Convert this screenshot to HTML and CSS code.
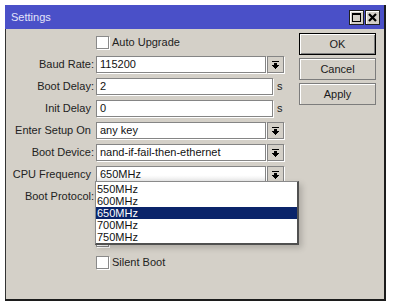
FILE: index.html
```html
<!DOCTYPE html>
<html>
<head>
<meta charset="utf-8">
<link rel="stylesheet" href="styles.css">
</head>
<body>
<div class="window">
  <div class="titlebar">
    <span class="title">Settings</span>
    <div class="tb-buttons">
      <span class="tb-btn"><svg width="13" height="13" viewBox="0 0 13 13" shape-rendering="crispEdges"><rect x="2.5" y="2.5" width="8" height="8" fill="none" stroke="#000"/><rect x="2" y="2" width="9" height="2" fill="#000"/></svg></span>
      <span class="tb-btn"><svg width="13" height="13" viewBox="0 0 13 13"><path d="M3 3L10 10M10 3L3 10" stroke="#000" stroke-width="2.2"/></svg></span>
    </div>
  </div>
  <div class="body">
    <div class="form">
      <div class="row check-row"><span class="label"></span><span class="checkbox"></span><span class="check-label">Auto Upgrade</span></div>
      <div class="row"><span class="label">Baud Rate:</span><span class="field sel">115200</span><span class="drop-btn"><svg width="7" height="8" viewBox="0 0 7 8" shape-rendering="crispEdges"><path d="M0 0h7v1H0z M2 2h3v2h2v1h-1v1h-1v1h-1v1h-1v-1h-1v-1h-1v-1H0v-1h2z" fill="#000"/></svg></span></div>
      <div class="row"><span class="label">Boot Delay:</span><span class="field num">2</span><span class="unit">s</span></div>
      <div class="row"><span class="label">Init Delay&nbsp;</span><span class="field num">0</span><span class="unit">s</span></div>
      <div class="row"><span class="label">Enter Setup On&nbsp;</span><span class="field sel">any key</span><span class="drop-btn"><svg width="7" height="8" viewBox="0 0 7 8" shape-rendering="crispEdges"><path d="M0 0h7v1H0z M2 2h3v2h2v1h-1v1h-1v1h-1v1h-1v-1h-1v-1h-1v-1H0v-1h2z" fill="#000"/></svg></span></div>
      <div class="row"><span class="label">Boot Device:</span><span class="field sel">nand-if-fail-then-ethernet</span><span class="drop-btn"><svg width="7" height="8" viewBox="0 0 7 8" shape-rendering="crispEdges"><path d="M0 0h7v1H0z M2 2h3v2h2v1h-1v1h-1v1h-1v1h-1v-1h-1v-1h-1v-1H0v-1h2z" fill="#000"/></svg></span></div>
      <div class="row"><span class="label">CPU Frequency&nbsp;</span><span class="field sel active">650MHz</span><span class="drop-btn"><svg width="7" height="8" viewBox="0 0 7 8" shape-rendering="crispEdges"><path d="M0 0h7v1H0z M2 2h3v2h2v1h-1v1h-1v1h-1v1h-1v-1h-1v-1h-1v-1H0v-1h2z" fill="#000"/></svg></span>
        <div class="listbox">
          <div class="item">550MHz</div>
          <div class="item">600MHz</div>
          <div class="item selected">650MHz</div>
          <div class="item">700MHz</div>
          <div class="item">750MHz</div>
        </div>
      </div>
      <div class="row"><span class="label">Boot Protocol:</span><span class="field sel"></span><span class="drop-btn"></span></div>
      <div class="row check-row"><span class="label"></span><span class="checkbox"></span></div>
      <div class="row check-row"><span class="label"></span><span class="checkbox"></span></div>
      <div class="row check-row"><span class="label"></span><span class="checkbox"></span><span class="check-label">Silent Boot</span></div>
    </div>
    <div class="actions">
      <button class="btn btn-default">OK</button>
      <button class="btn">Cancel</button>
      <button class="btn">Apply</button>
    </div>
  </div>
</div>
</body>
</html>
```
FILE: styles.css
```css
body {
  margin: 0;
  background: #fff;
  font: 11px "Liberation Sans", Arial, sans-serif;
  color: #1a1a1a;
}

.window {
  margin: 5px 0 0 5px;
  width: 381px;
  height: 296px;
  box-sizing: border-box;
  border-right: 2px solid #1c1c1c;
  border-bottom: 2px solid #1c1c1c;
  background: #d4d0c8;
  display: flex;
  flex-direction: column;
}

.titlebar {
  height: 24px;
  flex: none;
  background: #4a50c8;
  display: flex;
  align-items: center;
  justify-content: space-between;
  padding: 0 4px 0 6px;
}

.title {
  color: #e4e4fa;
  font-size: 11px;
}

.tb-buttons {
  display: flex;
  gap: 1px;
  margin-top: 1px;
}

.tb-btn {
  width: 15px;
  height: 15px;
  box-sizing: border-box;
  border: 1px solid #202020;
  background: #d4d0c8;
  box-shadow: inset 1px 1px #fff;
  display: flex;
}

.body {
  flex: 1;
  display: flex;
  border-left: 1px solid #333;
  padding-top: 4px;
}

.form {
  width: 293px;
  flex: none;
  padding-top: 1px;
}

.row {
  height: 22px;
  display: flex;
  align-items: flex-start;
  position: relative;
}

.check-row {
  padding-top: 2px;
  box-sizing: border-box;
}

.label {
  width: 88px;
  margin-right: 2px;
  flex: none;
  text-align: right;
  line-height: 17px;
  white-space: nowrap;
  color: #222;
}

.field {
  height: 17px;
  box-sizing: border-box;
  border: 1px solid #858585;
  background: #fff;
  box-shadow: 1px 1px 0 #fff;
  line-height: 15px;
  padding-left: 3px;
  white-space: nowrap;
  overflow: hidden;
  color: #111;
}

.field.sel {
  width: 170px;
}

.field.num {
  width: 177px;
}

.field.active {
  background: linear-gradient(#fff 55%, #e6e6e6);
}

.unit {
  margin-left: 4px;
  line-height: 17px;
}

.drop-btn {
  width: 17px;
  height: 17px;
  margin-left: 1px;
  box-sizing: border-box;
  border: 1px solid #858585;
  box-shadow: 1px 1px 0 #fff;
  background: #d4d0c8;
  display: flex;
  align-items: center;
  justify-content: center;
}

.checkbox {
  width: 13px;
  height: 13px;
  box-sizing: border-box;
  border: 1px solid #8a8a8a;
  background: #fff;
  box-shadow: 1px 1px 0 #fff;
  flex: none;
}

.check-label {
  margin-left: 3px;
  line-height: 13px;
  color: #222;
}

.listbox {
  position: absolute;
  top: 15px;
  left: 89px;
  width: 204px;
  box-sizing: border-box;
  background: #fff;
  border-top: 1px solid #8a8a8a;
  border-left: 1px solid #8a8a8a;
  border-right: 2px solid #505050;
  border-bottom: 2px solid #505050;
  padding-top: 1px;
  box-shadow: 3px 3px 6px rgba(0, 0, 0, 0.18);
  z-index: 5;
}

.item {
  height: 12px;
  line-height: 12px;
  padding-left: 1px;
  color: #111;
}

.item.selected {
  background: #0a246a;
  color: #fff;
}

.actions {
  width: 77px;
  display: flex;
  flex-direction: column;
  gap: 3px;
}

.btn {
  height: 22px;
  box-sizing: border-box;
  border: 1px solid #7c7c7c;
  background: #d4d0c8;
  box-shadow: inset 1px 1px #fff;
  font: inherit;
  color: #1a1a1a;
  padding: 0;
  margin: 0;
}

.btn-default {
  border-color: #000;
  box-shadow: inset 1px 1px #fff, inset -1px -1px #808080;
}
```
